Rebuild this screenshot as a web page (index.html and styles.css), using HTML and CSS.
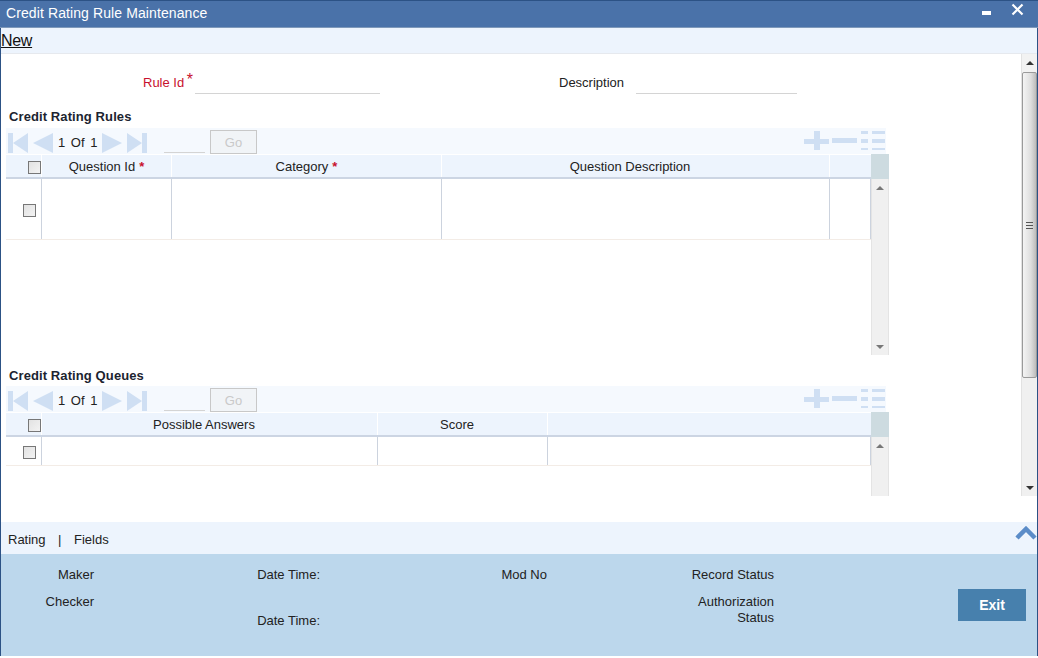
FILE: index.html
```html
<!DOCTYPE html>
<html lang="en">
<head>
<meta charset="utf-8">
<title>Credit Rating Rule Maintenance</title>
<link rel="stylesheet" href="styles.css">
</head>
<body>
<div class="window">
  <header class="titlebar">
    <span class="title">Credit Rating Rule Maintenance</span>
    <span class="winctl">
      <svg class="ico-min" width="9" height="4" viewBox="0 0 9 4"><rect width="9" height="4" fill="#fff"/></svg>
      <svg class="ico-close" width="13" height="13" viewBox="0 0 13 13"><path d="M1.5 1.5l10 10M11.5 1.5l-10 10" stroke="#fff" stroke-width="2.2" fill="none"/></svg>
    </span>
  </header>
  <nav class="menubar"><a class="newlink">New</a></nav>
  <div class="body">
    <main class="content">
      <div class="formrow">
        <label class="lbl-rule">Rule Id <span class="bigstar">*</span></label>
        <span class="field f-rule"></span>
        <label class="lbl-desc">Description</label>
        <span class="field f-desc"></span>
      </div>

      <h2 class="sect s1">Credit Rating Rules</h2>
      <section class="grid">
        <div class="pager">
          <svg class="nav" width="139" height="20" viewBox="0 0 139 20" fill="#cfdff3">
            <path d="M0 0h5v20H0zM5 10L20 0v20zM25 10L45 0v20z"/>
            <path d="M94 0l20 10-20 10zM119 0l15 10-15 10zM134 0h5v20h-5z"/>
          </svg>
          <span class="pagetext">1 Of 1</span>
          <span class="pageinput"></span>
          <button class="go">Go</button>
          <span class="tools">
            <svg width="81" height="19" viewBox="0 0 81 19" fill="#cfdff3">
              <path d="M10 0h6v8h9v5h-9v6h-6v-6H0V8h10z"/>
              <rect x="28" y="7" width="25" height="5"/>
              <path d="M57 0h7v3h-7zM68 0h13v3H68zM57 8h7v4h-7zM68 8h13v4H68zM57 17h7v2h-7zM68 17h13v2H68z"/>
            </svg>
          </span>
        </div>
        <div class="tablewrap t1">
          <div class="tablemain">
            <div class="row head">
              <div class="c c-chk"><span class="chk chk-h"></span></div>
              <div class="c c-q">Question Id <span class="star">*</span></div>
              <div class="c c-cat">Category <span class="star">*</span></div>
              <div class="c c-qd nostar">Question Description</div>
              <div class="c c-end"></div>
            </div>
            <div class="row data tall">
              <div class="c c-chk"><span class="chk"></span></div>
              <div class="c c-q"></div>
              <div class="c c-cat"></div>
              <div class="c c-qd"></div>
              <div class="c c-end"></div>
            </div>
          </div>
          <div class="vscroll">
            <div class="vhead"></div>
            <div class="vtrack"><span class="tri up"></span><span class="tri down"></span></div>
          </div>
        </div>
      </section>

      <h2 class="sect s2">Credit Rating Queues</h2>
      <section class="grid">
        <div class="pager">
          <svg class="nav" width="139" height="20" viewBox="0 0 139 20" fill="#cfdff3">
            <path d="M0 0h5v20H0zM5 10L20 0v20zM25 10L45 0v20z"/>
            <path d="M94 0l20 10-20 10zM119 0l15 10-15 10zM134 0h5v20h-5z"/>
          </svg>
          <span class="pagetext">1 Of 1</span>
          <span class="pageinput"></span>
          <button class="go">Go</button>
          <span class="tools">
            <svg width="81" height="19" viewBox="0 0 81 19" fill="#cfdff3">
              <path d="M10 0h6v8h9v5h-9v6h-6v-6H0V8h10z"/>
              <rect x="28" y="7" width="25" height="5"/>
              <path d="M57 0h7v3h-7zM68 0h13v3H68zM57 8h7v4h-7zM68 8h13v4H68zM57 17h7v2h-7zM68 17h13v2H68z"/>
            </svg>
          </span>
        </div>
        <div class="tablewrap t2">
          <div class="tablemain">
            <div class="row head">
              <div class="c c-chk"><span class="chk chk-h"></span></div>
              <div class="c c-pa nostar">Possible Answers</div>
              <div class="c c-sc nostar">Score</div>
              <div class="c c-rest"></div>
            </div>
            <div class="row data short">
              <div class="c c-chk"><span class="chk"></span></div>
              <div class="c c-pa"></div>
              <div class="c c-sc"></div>
              <div class="c c-rest"></div>
            </div>
          </div>
          <div class="vscroll">
            <div class="vhead"></div>
            <div class="vtrack"><span class="tri up"></span></div>
          </div>
        </div>
      </section>
    </main>
    <aside class="pagescroll">
      <div class="ps-btn"><span class="tri dark up"></span></div>
      <div class="ps-thumb"><span class="grip"></span></div>
      <div class="ps-rest"><span class="tri dark down"></span></div>
    </aside>
  </div>
  <div class="tabsbar">
    <span class="tab">Rating</span><span class="sep">|</span><span class="tab">Fields</span>
    <svg class="chev" width="22" height="14" viewBox="0 0 22 14"><path d="M2 12l9-9 9 9" stroke="#5b8cc8" stroke-width="4.5" fill="none"/></svg>
  </div>
  <footer class="audit">
    <div class="acol col1"><span>Maker</span><span>Checker</span></div>
    <div class="acol col2"><span>Date Time:</span><span>Date Time:</span></div>
    <div class="acol col3"><span>Mod No</span></div>
    <div class="acol col4"><span>Record Status</span><span>Authorization<br>Status</span></div>
    <button class="exit">Exit</button>
  </footer>
</div>
</body>
</html>
```

FILE: styles.css
```css
* { box-sizing: border-box; }
html, body { margin: 0; padding: 0; }
body {
  width: 1038px;
  height: 658px;
  overflow: hidden;
  font-family: "Liberation Sans", Arial, sans-serif;
  font-size: 13px;
  color: #222;
  background: #fff;
}
.window {
  width: 1038px;
  height: 656px;
  display: flex;
  flex-direction: column;
  border-left: 1px solid #2c5285;
  border-right: 1px solid #2c5285;
}
.titlebar {
  height: 28px;
  flex: none;
  margin: 0 -1px;
  background: #4a72a9;
  border-top: 1px solid #2c5285;
  border-bottom: 1px solid #7f99ba;
  color: #fff;
  display: flex;
  align-items: center;
  justify-content: space-between;
  padding-left: 6px;
}
.title { font-size: 14px; letter-spacing: 0.1px; position: relative; top: -1px; }
.winctl { display: flex; align-items: flex-start; gap: 20px; padding-right: 14px; height: 100%; }
.ico-min { margin-top: 10px; }
.ico-close { margin-top: 2px; }
.menubar {
  height: 26px;
  flex: none;
  background: #edf4fd;
  border-bottom: 1px solid #e6e9ee;
  display: flex;
  align-items: center;
}
.newlink { font-size: 16px; letter-spacing: -0.3px; color: #111; text-decoration: underline; }
.body { flex: none; height: 442px; display: flex; background: #fff; }
.content { width: 1020px; flex: none; overflow: hidden; }
.formrow { height: 47px; display: flex; align-items: flex-start; padding-top: 21px; }
.lbl-rule { margin-left: 142px; color: #c8102e; width: 52px; white-space: nowrap; line-height: 15px; }
.bigstar { font-size: 16px; line-height: 0; position: relative; top: -2px; left: -1px; }
.field { display: block; height: 19px; border-bottom: 1px solid #d4d4d4; }
.f-rule { width: 185px; }
.lbl-desc { margin-left: 179px; color: #222; width: 77px; }
.f-desc { width: 161px; }
.sect { margin: 0; font-size: 13px; letter-spacing: 0.1px; font-weight: bold; color: #1c2430; padding-left: 8px; line-height: 16px; }
.s1 { padding-top: 8px; height: 27px; }
.s2 { padding-top: 13px; height: 31px; }
.grid { width: 888px; }
.pager {
  height: 26px;
  width: 880px;
  margin-left: 5px;
  background: #f5f9fe;
  display: flex;
  align-items: flex-start;
  position: relative;
}
.nav { margin-left: 2px; margin-top: 5px; flex: none; }
.pagetext { position: absolute; left: 52px; top: 7px; font-size: 13px; word-spacing: 2px; color: #222; }
.pageinput { display: block; width: 41px; height: 25px; margin-left: 17px; border-bottom: 1px solid #d4d4d4; flex: none; }
.go {
  width: 47px;
  height: 24px;
  margin-left: 5px;
  margin-top: 2px;
  background: #f1f4f7;
  border: 1px solid #c8c8c8;
  color: #c9c9c9;
  font: 13px "Liberation Sans", Arial, sans-serif;
  padding: 0;
}
.tools { margin-left: auto; margin-right: 1px; display: flex; margin-top: 3px; }
.tablewrap { display: flex; width: 883px; margin-left: 5px; }
.t1 { height: 201px; }
.t2 { height: 84px; }
.tablemain { width: 865px; flex: none; }
.row { display: flex; }
.head { height: 25px; background: #edf4fd; border-bottom: 2px solid #ccd5e3; border-top: 1px solid #fff; color: #222; }
.data { border-bottom: 1px solid #f3ece6; }
.tall { height: 61px; }
.short { height: 29px; }
.c { display: flex; align-items: center; justify-content: center; height: 100%; flex: none; }
.head .c { border-right: 1px solid #fff; }
.data .c { border-right: 1px solid #ccd3de; }
.c-chk { width: 36px; }
.c-q { width: 130px; }
.c-cat { width: 270px; }
.c-qd { width: 388px; }
.c-end { width: 41px; }
.c-pa { width: 336px; }
.c-sc { width: 170px; }
.c-rest { width: 323px; }
.head .c-rest, .head .c-end { border-right: none; }
.head .nostar { padding-right: 11px; }
.star { color: #c8102e; font-weight: bold; margin-left: 4px; }
.chk {
  display: block;
  width: 13px;
  height: 13px;
  border: 1px solid #777;
  background: linear-gradient(135deg, #e2e2e2, #f3f3f3);
  flex: none;
  position: relative;
}
.chk-h { left: 11px; top: 1px; }
.data .chk { left: 6px; top: 1px; }
.vscroll { width: 18px; flex: none; display: flex; flex-direction: column; }
.vhead { height: 25px; background: #cddbe0; flex: none; }
.vtrack {
  flex: 1;
  background: #f0f0f0;
  border-left: 1px solid #e4e4e4;
  border-right: 1px solid #e4e4e4;
  position: relative;
}
.tri { position: absolute; left: 4px; width: 0; height: 0; border-left: 4px solid transparent; border-right: 4px solid transparent; }
.tri.up { top: 7px; border-bottom: 4px solid #777; }
.tri.down { bottom: 6px; border-top: 4px solid #777; }
.tri.dark.up { border-bottom-color: #333; }
.tri.dark.down { border-top-color: #333; }
.pagescroll { width: 16px; flex: none; display: flex; flex-direction: column; background: #f0f0f0; border-left: 1px solid #e2e2e2; }
.ps-btn { height: 18px; position: relative; background: #f2f2f2; flex: none; }
.ps-thumb {
  height: 306px;
  flex: none;
  background: linear-gradient(90deg, #f4f4f4, #dedede 60%, #bcbcbc);
  border: 1px solid #9a9a9a;
  border-radius: 2px;
  display: flex;
  align-items: center;
  justify-content: center;
}
.grip { display: block; width: 7px; height: 7px; border-top: 1px solid #555; border-bottom: 1px solid #555; background: linear-gradient(#555,#555) center/100% 1px no-repeat; }
.ps-rest { flex: 1; position: relative; }
.tabsbar {
  height: 32px;
  flex: none;
  background: #edf4fd;
  margin-top: 26px;
  display: flex;
  align-items: center;
  padding-left: 7px;
  padding-top: 2px;
  color: #222;
}
.sep { margin: 0 12.5px; }
.chev { margin-left: auto; flex: none; align-self: flex-start; margin-top: 2px; }
.audit { flex: 1; background: #bcd7ec; position: relative; color: #222; display: flex; line-height: 16px; }
.acol { display: flex; flex-direction: column; align-items: flex-end; text-align: right; }
.col1 { width: 93px; padding-top: 13px; gap: 11px; }
.col2 { width: 226px; padding-top: 13px; gap: 30px; }
.col3 { width: 227px; padding-top: 13px; }
.col4 { width: 227px; padding-top: 13px; gap: 11px; }
.exit {
  position: absolute;
  left: 957px;
  top: 35px;
  width: 68px;
  height: 32px;
  background: #4780ad;
  border: none;
  color: #fff;
  font: bold 14px "Liberation Sans", Arial, sans-serif;
  padding: 0;
}
```
